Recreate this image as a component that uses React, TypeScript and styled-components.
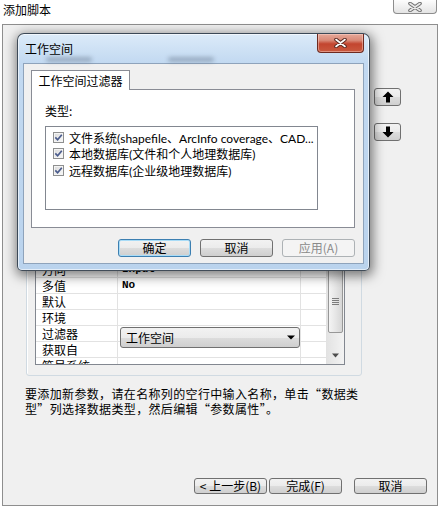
import React from "react";
import styled, { createGlobalStyle, css } from "styled-components";

const FONT = `"Noto Sans CJK SC", "Noto Sans", sans-serif`;

const Global = createGlobalStyle`
  html, body { margin: 0; padding: 0; background: #fff; }
  body { font-family: ${FONT}; font-size: 12px; color: #000; }
`;

const Screen = styled.div`
  position: relative;
  width: 441px;
  height: 509px;
  overflow: hidden;
  background: #fff;
  display: flex;
  flex-direction: column;
  font-family: ${FONT};
  font-size: 12px;
  color: #000;
`;

const TitleRow = styled.div`
  height: 24px;
  flex: none;
  display: flex;
  justify-content: space-between;
  align-items: flex-start;
`;

const WindowTitle = styled.span`
  margin: 3px 0 0 3px;
  font-size: 12px;
  line-height: 14px;
`;

const SysClose = styled.div`
  width: 44px;
  height: 14px;
  margin-right: 4px;
  box-sizing: border-box;
  border: 1px solid #8d8d8d;
  border-top: none;
  border-radius: 0 0 4px 4px;
  background: linear-gradient(#fdfdfd, #e4e4e4);
  display: flex;
  align-items: center;
  justify-content: center;
`;

const Frame = styled.div`
  flex: 1;
  margin: 0 3px 3px 2px;
  box-sizing: border-box;
  border: 1px solid #8e8e8e;
  background: #f0f0f0;
  display: flex;
  flex-direction: column;
  padding: 19px 10px 11px 23px;
`;

const MainRow = styled.div`
  display: flex;
  gap: 12px;
  align-items: flex-start;
`;

const LeftColumn = styled.div`
  width: 336px;
  display: flex;
  flex-direction: column;
`;

const GroupBox = styled.div`
  height: 332px;
  box-sizing: border-box;
  border: 1px solid #d0dae2;
  border-radius: 3px;
  box-shadow: inset 1px 1px 0 #fff;
  padding: 7px 16px 10px 8px;
  display: flex;
  flex-direction: column;
`;

const Grid = styled.div`
  flex: 1;
  display: flex;
  border: 1px solid #828790;
  background: #fff;
  min-height: 0;
`;

const GridRows = styled.div`
  flex: 1;
  display: flex;
  flex-direction: column;
  justify-content: flex-end;
  overflow: hidden;
`;

const GridRow = styled.div`
  flex: none;
  height: 16px;
  display: grid;
  grid-template-columns: 82px 183px 1fr;
  &:last-child {
    margin-bottom: -10px;
  }
`;

const Cell = styled.div<{ $mono?: boolean }>`
  position: relative;
  box-sizing: border-box;
  border-right: 1px solid #e2e2e2;
  border-bottom: 1px solid #e2e2e2;
  padding-left: ${(p) => (p.$mono ? "4px" : "6px")};
  line-height: 15px;
  white-space: nowrap;
  font-size: 12px;
  ${(p) =>
    p.$mono &&
    css`
      font-family: "Liberation Mono", monospace;
      font-weight: bold;
      font-size: 11px;
    `}
`;

const Combo = styled.div`
  position: absolute;
  left: 2px;
  top: 1px;
  width: 180px;
  height: 21px;
  z-index: 1;
  box-sizing: border-box;
  border: 1px solid #707070;
  border-radius: 3px;
  background: linear-gradient(#f2f2f2 0%, #ebebeb 50%, #dddddd 50%, #cfcfcf 100%);
  display: flex;
  align-items: center;
  justify-content: space-between;
  padding: 0 4px 0 5px;
  font-family: ${FONT};
  font-weight: normal;
  font-size: 12px;
`;

const ScrollBar = styled.div`
  width: 17px;
  flex: none;
  background: linear-gradient(to right, #e3e3e3, #f3f3f3);
  display: flex;
  flex-direction: column;
  justify-content: flex-end;
  align-items: center;
`;

const Thumb = styled.div`
  width: 15px;
  height: 64px;
  box-sizing: border-box;
  border: 1px solid #979797;
  border-radius: 2px;
  background: linear-gradient(to right, #f4f4f4, #e6e6e6 50%, #d6d6d6);
  margin-bottom: 14px;
  display: flex;
  align-items: center;
  justify-content: center;
`;

const ScrollArrow = styled.div`
  width: 17px;
  height: 17px;
  display: flex;
  align-items: center;
  justify-content: center;
`;

const Description = styled.p`
  margin: 10px 0 0 -1px;
  font-size: 12px;
  line-height: 15px;
  letter-spacing: 0.35px;
  white-space: nowrap;
`;

const RightColumn = styled.div`
  display: flex;
  flex-direction: column;
  gap: 17px;
  padding-top: 44px;
`;

const ArrowButton = styled.div`
  width: 27px;
  height: 18px;
  box-sizing: border-box;
  border: 1px solid #707070;
  border-radius: 3px;
  background: linear-gradient(#f2f2f2 0%, #ebebeb 50%, #dddddd 50%, #cfcfcf 100%);
  display: flex;
  align-items: center;
  justify-content: center;
`;

const WizardButtons = styled.div`
  margin-top: auto;
  display: flex;
  justify-content: flex-end;
`;

type Variant = "normal" | "default" | "disabled";

const PushButton = styled.div<{ $variant?: Variant; $gapBefore?: number; $h?: number }>`
  width: 73px;
  height: ${(p) => p.$h ?? 18}px;
  margin-left: ${(p) => p.$gapBefore ?? 0}px;
  box-sizing: border-box;
  border: 1px solid #707070;
  border-radius: 3px;
  background: linear-gradient(#f2f2f2 0%, #ebebeb 50%, #dddddd 50%, #cfcfcf 100%);
  display: flex;
  align-items: center;
  justify-content: center;
  font-size: 12px;
  line-height: 1;
  white-space: nowrap;
  ${(p) =>
    p.$variant === "default" &&
    css`
      border-color: #3c7fb1;
      box-shadow: inset 0 0 0 1px #a9dcf7;
    `}
  ${(p) =>
    p.$variant === "disabled" &&
    css`
      border-color: #adb2b5;
      background: #f4f4f4;
      color: #8a8a8a;
    `}
`;

/* ---------- dialog ---------- */

const Dialog = styled.div`
  position: absolute;
  left: 17px;
  top: 33px;
  width: 353px;
  height: 238px;
  box-sizing: border-box;
  border: 1px solid rgba(38, 48, 60, 0.85);
  border-radius: 7px 7px 5px 5px;
  background: linear-gradient(to bottom, #dcebf9 0px, #cfe2f5 14px, #c2d9f1 29px, #bad3ed 100%);
  box-shadow: 1px 3px 12px 2px rgba(0, 0, 0, 0.5), inset 0 0 0 1px rgba(255, 255, 255, 0.6);
  display: flex;
  flex-direction: column;
`;

const DialogTitleBar = styled.div`
  position: relative;
  height: 29px;
  flex: none;
  display: flex;
  align-items: center;
  padding-left: 7px;
`;

const DialogTitle = styled.span`
  font-size: 12px;
  line-height: 14px;
  position: relative;
  z-index: 1;
`;

/* blurred glimpse of the column headers behind the glass title bar */
const GlassSmudge = styled.span<{ $left: number; $width: number }>`
  position: absolute;
  left: ${(p) => p.$left}px;
  top: 23px;
  width: ${(p) => p.$width}px;
  height: 5px;
  border-radius: 3px;
  background: rgba(70, 85, 105, 0.35);
  filter: blur(2px);
`;

const RedClose = styled.div`
  position: absolute;
  top: 0;
  right: 5px;
  width: 47px;
  height: 19px;
  box-sizing: border-box;
  border: 1px solid #6d2a20;
  border-top: none;
  border-radius: 0 0 4px 4px;
  background: linear-gradient(#e5a899 0%, #d98a78 35%, #c3452f 55%, #c9593f 100%);
  box-shadow: inset 0 0 0 1px rgba(255, 220, 210, 0.45);
  display: flex;
  align-items: center;
  justify-content: center;
`;

const Client = styled.div`
  flex: 1;
  margin: 0 5px 6px;
  box-sizing: border-box;
  border: 1px solid #8ea3bb;
  background: #f0f0f0;
  padding: 6px 8px 0 7px;
  display: flex;
  flex-direction: column;
`;

const Tab = styled.div`
  position: relative;
  z-index: 1;
  width: 99px;
  height: 20px;
  box-sizing: border-box;
  border: 1px solid #898c95;
  border-bottom: none;
  background: #fff;
  display: flex;
  align-items: center;
  justify-content: center;
  font-size: 12px;
`;

const TabPanel = styled.div`
  margin-top: -1px;
  height: 139px;
  box-sizing: border-box;
  border: 1px solid #898c95;
  background: #fff;
  padding: 14px 0 0 13px;
`;

const FieldLabel = styled.div`
  font-size: 12px;
  line-height: 14px;
`;

const ListBox = styled.div`
  margin-top: 8px;
  width: 273px;
  height: 84px;
  box-sizing: border-box;
  border: 1px solid #828790;
  padding: 2px 0 0 7px;
  overflow: hidden;
`;

const CheckRow = styled.div`
  height: 16.5px;
  display: flex;
  align-items: center;
  gap: 5px;
  white-space: nowrap;
  font-family: "Lato", ${FONT};
  font-size: 12px;
`;

const CheckBox = styled.span`
  width: 11px;
  height: 11px;
  flex: none;
  box-sizing: border-box;
  border: 1px solid #8e8f8f;
  background: linear-gradient(135deg, #d8d8d8, #fbfbfb);
  box-shadow: inset 0 0 0 1px #f4f4f4;
  display: flex;
  align-items: center;
  justify-content: center;
`;

const DialogButtons = styled.div`
  margin-top: 11px;
  display: flex;
  justify-content: flex-end;
  gap: 9px;
`;

/* ---------- icons ---------- */

const HollowX = ({ outer, inner, w, h }: { outer: string; inner: string; w: number; h: number }) => (
  <svg width={w} height={h} viewBox={`0 0 ${w} ${h}`}>
    <path d={`M2 1.5 L${w - 2} ${h - 1.5} M${w - 2} 1.5 L2 ${h - 1.5}`} stroke={outer} strokeWidth={3.6} strokeLinecap="round" fill="none" />
    <path d={`M2 1.5 L${w - 2} ${h - 1.5} M${w - 2} 1.5 L2 ${h - 1.5}`} stroke={inner} strokeWidth={1.6} strokeLinecap="round" fill="none" />
  </svg>
);

const Tick = () => (
  <svg width="9" height="9" viewBox="0 0 9 9">
    <path d="M1.3 4.4 L3.6 6.8 L7.8 1.8" stroke="#4a5b8c" strokeWidth="1.7" fill="none" />
  </svg>
);

const BigArrow = ({ down }: { down?: boolean }) => (
  <svg width="12" height="12" viewBox="0 0 12 12" style={down ? { transform: "rotate(180deg)" } : undefined}>
    <polygon points="6,0.5 11.5,6 8,6 8,11.5 4,11.5 4,6 0.5,6" fill="#000" />
  </svg>
);

const SmallDown = ({ color = "#000", w = 8 }: { color?: string; w?: number }) => (
  <svg width={w} height="5" viewBox={`0 0 ${w} 5`}>
    <polygon points={`0,0.5 ${w},0.5 ${w / 2},4.5`} fill={color} />
  </svg>
);

const Grip = () => (
  <svg width="7" height="7" viewBox="0 0 7 7">
    {[0.5, 2.5, 4.5, 6.5].map((y) => (
      <line key={y} x1="0" x2="7" y1={y} y2={y} stroke="#7c7c7c" strokeWidth="1" />
    ))}
  </svg>
);

/* ---------- data ---------- */

const rows: [string, string][] = [
  ["方向", "Input"],
  ["多值", "No"],
  ["默认", ""],
  ["环境", ""],
  ["过滤器", "@combo"],
  ["获取自", ""],
  ["符号系统", ""],
];

const filters = [
  "文件系统(shapefile、ArcInfo coverage、CAD...",
  "本地数据库(文件和个人地理数据库)",
  "远程数据库(企业级地理数据库)",
];

export default function App() {
  return (
    <Screen>
      <Global />
      <TitleRow>
        <WindowTitle>添加脚本</WindowTitle>
        <SysClose>
          <HollowX outer="#6f6f6f" inner="#e9e9e9" w={14} h={10} />
        </SysClose>
      </TitleRow>

      <Frame>
        <MainRow>
          <LeftColumn>
            <GroupBox>
              <Grid>
                <GridRows>
                  {rows.map(([name, value]) => (
                    <GridRow key={name}>
                      <Cell>{name}</Cell>
                      <Cell $mono={value !== "" && value !== "@combo"}>
                        {value === "@combo" ? (
                          <Combo>
                            <span>工作空间</span>
                            <SmallDown />
                          </Combo>
                        ) : (
                          value
                        )}
                      </Cell>
                      <Cell />
                    </GridRow>
                  ))}
                </GridRows>
                <ScrollBar>
                  <Thumb>
                    <Grip />
                  </Thumb>
                  <ScrollArrow>
                    <SmallDown color="#4d4d4d" w={7} />
                  </ScrollArrow>
                </ScrollBar>
              </Grid>
            </GroupBox>
            <Description>
              要添加新参数，请在名称列的空行中输入名称，单击“数据类
              <br />
              型”列选择数据类型，然后编辑“参数属性”。
            </Description>
          </LeftColumn>
          <RightColumn>
            <ArrowButton>
              <BigArrow />
            </ArrowButton>
            <ArrowButton>
              <BigArrow down />
            </ArrowButton>
          </RightColumn>
        </MainRow>

        <WizardButtons>
          <PushButton $h={16}>&lt; 上一步(B)</PushButton>
          <PushButton $h={16} $gapBefore={2}>完成(F)</PushButton>
          <PushButton $h={16} $gapBefore={12}>取消</PushButton>
        </WizardButtons>
      </Frame>

      <Dialog>
        <DialogTitleBar>
          <GlassSmudge $left={28} $width={46} />
          <GlassSmudge $left={150} $width={46} />
          <DialogTitle>工作空间</DialogTitle>
          <RedClose>
            <HollowX outer="#5a2a22" inner="#ffffff" w={13} h={10} />
          </RedClose>
        </DialogTitleBar>
        <Client>
          <Tab>工作空间过滤器</Tab>
          <TabPanel>
            <FieldLabel>类型:</FieldLabel>
            <ListBox>
              {filters.map((f) => (
                <CheckRow key={f}>
                  <CheckBox>
                    <Tick />
                  </CheckBox>
                  <span>{f}</span>
                </CheckRow>
              ))}
            </ListBox>
          </TabPanel>
          <DialogButtons>
            <PushButton $variant="default">确定</PushButton>
            <PushButton>取消</PushButton>
            <PushButton $variant="disabled">应用(A)</PushButton>
          </DialogButtons>
        </Client>
      </Dialog>
    </Screen>
  );
}
